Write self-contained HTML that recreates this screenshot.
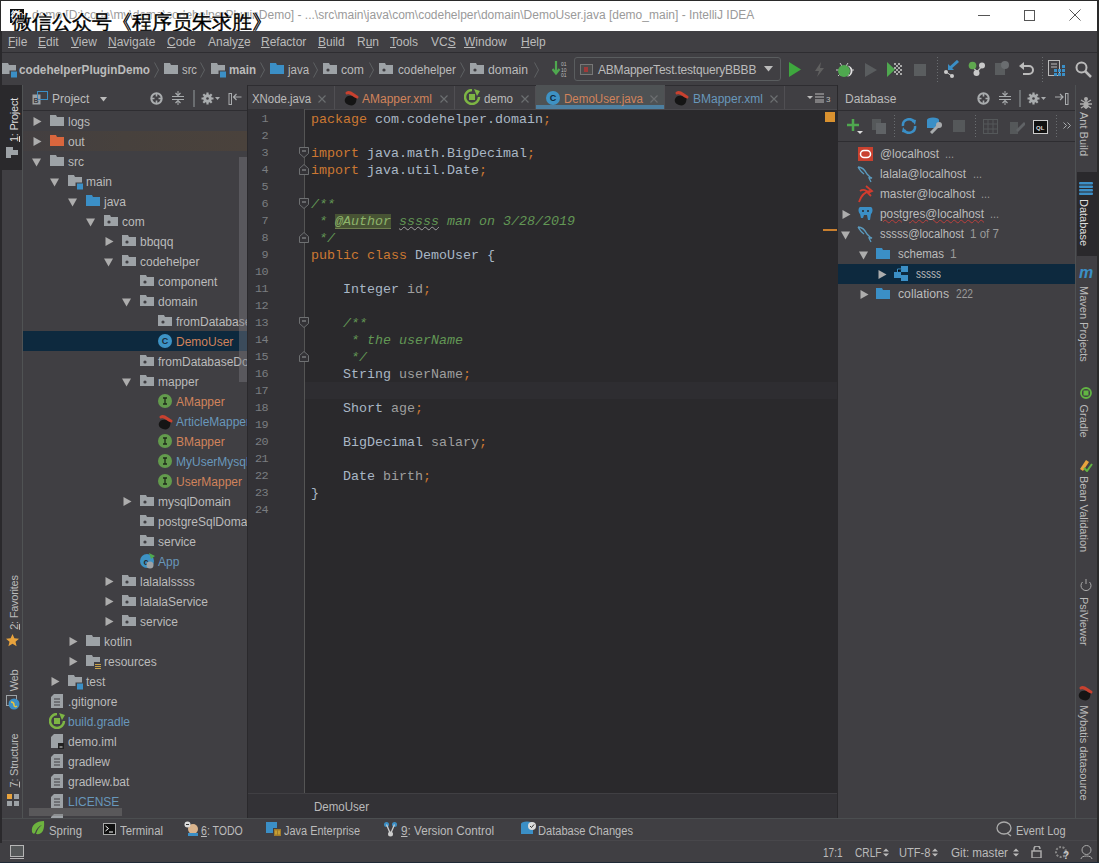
<!DOCTYPE html>
<html><head><meta charset="utf-8">
<style>
*{margin:0;padding:0;box-sizing:border-box}
html,body{width:1099px;height:863px;overflow:hidden;background:#403F43;font-family:"Liberation Sans",sans-serif;font-size:12px;color:#BBBBBB;position:relative}
.a{position:absolute}
.t{position:absolute;white-space:nowrap;line-height:15px}
u{text-decoration:underline;text-underline-offset:1px}
.code{white-space:pre;font-family:"Liberation Mono",monospace;font-size:13.33px;line-height:17px;color:#A9B7C6}
.ln{font-family:"Liberation Mono",monospace;font-size:11.8px;letter-spacing:-0.6px;line-height:17px;color:#7A7D80;text-align:right}
k{color:#CC7832}
c{color:#629755;font-style:italic}
f{color:#9E9E9E}
.an{background:#475334;color:#8DB46A;box-shadow:inset 0 -1px 0 #6F7F4F}
.ty{text-decoration:underline wavy #A0A0A0;text-decoration-thickness:1px}
</style></head><body>
<div class="a" style="left:0px;top:0px;width:1099px;height:31px;background:#FFFFFF;"></div>
<div class="a" style="left:0px;top:0px;width:1099px;height:1px;background:#2A2A2A;"></div>
<div class="a" style="left:0px;top:0px;width:1px;height:31px;background:#2A2A2A;"></div>
<div class="a" style="left:1097px;top:0px;width:2px;height:863px;background:#2A2A2A;"></div>
<div class="t" style="left:32px;top:8px;color:#9A9A9A;font-size:12px;letter-spacing:0px;">demo [D:\code\my\demo\codehelperPluginDemo] - ...\src\main\java\com\codehelper\domain\DemoUser.java [demo_main] - IntelliJ IDEA</div>
<div class="a" style="left:10px;top:9px;width:14px;height:14px;background:#111;"></div>
<div class="t" style="left:11px;top:8px;color:#fff;font-size:11px;font-weight:bold;">微</div>
<div class="t" style="left:12px;top:12px;font-size:19.5px;line-height:20px;color:#000;-webkit-text-stroke:0.4px #000;text-shadow:1px 0 #fff,-1px 0 #fff,0 1px #fff,0 -1px #fff;">微信公众号《程序员朱求胜》</div>
<div class="a" style="left:978px;top:15px;width:12px;height:1px;background:#555;"></div>
<div class="a" style="left:1024px;top:10px;width:11px;height:11px;background:transparent;border:1px solid #555;"></div>
<svg class="a" style="left:1069px;top:9px;" width="12" height="12" viewBox="0 0 12 12"><path d="M0.5 0.5L11.5 11.5M11.5 0.5L0.5 11.5" stroke="#555" stroke-width="1"/></svg>
<div class="a" style="left:0px;top:31px;width:1097px;height:21px;background:#403F43;"></div>
<div class="t" style="left:8px;top:35px;color:#BBBBBB;font-size:12px;"><u>F</u>ile</div>
<div class="t" style="left:38px;top:35px;color:#BBBBBB;font-size:12px;"><u>E</u>dit</div>
<div class="t" style="left:71px;top:35px;color:#BBBBBB;font-size:12px;"><u>V</u>iew</div>
<div class="t" style="left:108px;top:35px;color:#BBBBBB;font-size:12px;"><u>N</u>avigate</div>
<div class="t" style="left:167px;top:35px;color:#BBBBBB;font-size:12px;"><u>C</u>ode</div>
<div class="t" style="left:208px;top:35px;color:#BBBBBB;font-size:12px;">Analy<u>z</u>e</div>
<div class="t" style="left:261px;top:35px;color:#BBBBBB;font-size:12px;"><u>R</u>efactor</div>
<div class="t" style="left:318px;top:35px;color:#BBBBBB;font-size:12px;"><u>B</u>uild</div>
<div class="t" style="left:357px;top:35px;color:#BBBBBB;font-size:12px;">R<u>u</u>n</div>
<div class="t" style="left:390px;top:35px;color:#BBBBBB;font-size:12px;"><u>T</u>ools</div>
<div class="t" style="left:431px;top:35px;color:#BBBBBB;font-size:12px;">VC<u>S</u></div>
<div class="t" style="left:464px;top:35px;color:#BBBBBB;font-size:12px;"><u>W</u>indow</div>
<div class="t" style="left:521px;top:35px;color:#BBBBBB;font-size:12px;"><u>H</u>elp</div>
<div class="a" style="left:0px;top:52px;width:1097px;height:1px;background:#2E2D31;"></div>
<div class="a" style="left:0px;top:53px;width:1097px;height:32px;background:#403F43;"></div>
<div class="a" style="left:0px;top:85px;width:1097px;height:1px;background:#2E2D31;"></div>
<svg class="a" style="left:2px;top:63px;" width="16" height="15" viewBox="0 0 16 15"><path d="M0 0h6l1 2h7v9H0z" fill="#9DA2A6"/><rect x="7.5" y="7.5" width="8" height="7" fill="#403F43"/><rect x="9" y="8.5" width="6" height="6" fill="#3B8FC6"/></svg>
<div class="t" style="left:19px;top:63px;color:#BBBBBB;font-size:12px;font-weight:bold;transform-origin:0 0;transform:scaleX(0.9775);">codehelperPluginDemo</div>
<svg class="a" style="left:164px;top:63px;" width="14" height="12" viewBox="0 0 14 12"><path d="M0 0h6l1 2h7v9H0z" fill="#9DA2A6"/></svg>
<div class="t" style="left:182px;top:63px;color:#BBBBBB;font-size:12px;transform-origin:0 0;transform:scaleX(0.9377);">src</div>
<svg class="a" style="left:211px;top:63px;" width="16" height="15" viewBox="0 0 16 15"><path d="M0 0h6l1 2h7v9H0z" fill="#9DA2A6"/><rect x="7.5" y="7.5" width="8" height="7" fill="#403F43"/><rect x="9" y="8.5" width="6" height="6" fill="#3B8FC6"/></svg>
<div class="t" style="left:229px;top:63px;color:#BBBBBB;font-size:12px;font-weight:bold;transform-origin:0 0;transform:scaleX(0.9640);">main</div>
<svg class="a" style="left:270px;top:63px;" width="14" height="12" viewBox="0 0 14 12"><path d="M0 0h6l1 2h7v9H0z" fill="#3B8FC6"/></svg>
<div class="t" style="left:288px;top:63px;color:#BBBBBB;font-size:12px;transform-origin:0 0;transform:scaleX(0.9540);">java</div>
<svg class="a" style="left:323px;top:63px;" width="14" height="12" viewBox="0 0 14 12"><path d="M0 0h6l1 2h7v9H0z" fill="#9DA2A6"/><circle cx="5" cy="7" r="1.6" fill="#403F43"/></svg>
<div class="t" style="left:341px;top:63px;color:#BBBBBB;font-size:12px;transform-origin:0 0;transform:scaleX(1.0146);">com</div>
<svg class="a" style="left:379px;top:63px;" width="14" height="12" viewBox="0 0 14 12"><path d="M0 0h6l1 2h7v9H0z" fill="#9DA2A6"/><circle cx="5" cy="7" r="1.6" fill="#403F43"/></svg>
<div class="t" style="left:398px;top:63px;color:#BBBBBB;font-size:12px;transform-origin:0 0;transform:scaleX(0.9768);">codehelper</div>
<svg class="a" style="left:470px;top:63px;" width="14" height="12" viewBox="0 0 14 12"><path d="M0 0h6l1 2h7v9H0z" fill="#9DA2A6"/><circle cx="5" cy="7" r="1.6" fill="#403F43"/></svg>
<div class="t" style="left:488px;top:63px;color:#BBBBBB;font-size:12px;transform-origin:0 0;transform:scaleX(1.0163);">domain</div>
<svg class="a" style="left:154px;top:62px;" width="5" height="16" viewBox="0 0 5 16"><path d="M0.5 0.5L4.5 8L0.5 15.5" stroke="#5E6163" fill="none" stroke-width="1"/></svg>
<svg class="a" style="left:200px;top:62px;" width="5" height="16" viewBox="0 0 5 16"><path d="M0.5 0.5L4.5 8L0.5 15.5" stroke="#5E6163" fill="none" stroke-width="1"/></svg>
<svg class="a" style="left:260px;top:62px;" width="5" height="16" viewBox="0 0 5 16"><path d="M0.5 0.5L4.5 8L0.5 15.5" stroke="#5E6163" fill="none" stroke-width="1"/></svg>
<svg class="a" style="left:313px;top:62px;" width="5" height="16" viewBox="0 0 5 16"><path d="M0.5 0.5L4.5 8L0.5 15.5" stroke="#5E6163" fill="none" stroke-width="1"/></svg>
<svg class="a" style="left:369px;top:62px;" width="5" height="16" viewBox="0 0 5 16"><path d="M0.5 0.5L4.5 8L0.5 15.5" stroke="#5E6163" fill="none" stroke-width="1"/></svg>
<svg class="a" style="left:460px;top:62px;" width="5" height="16" viewBox="0 0 5 16"><path d="M0.5 0.5L4.5 8L0.5 15.5" stroke="#5E6163" fill="none" stroke-width="1"/></svg>
<svg class="a" style="left:534px;top:62px;" width="5" height="16" viewBox="0 0 5 16"><path d="M0.5 0.5L4.5 8L0.5 15.5" stroke="#5E6163" fill="none" stroke-width="1"/></svg>
<svg class="a" style="left:552px;top:61px;" width="16" height="17" viewBox="0 0 16 17"><path d="M4 0v11M0.5 8L4 12.5L7.5 8" stroke="#4FA84F" stroke-width="2.2" fill="none"/><text x="9" y="5" font-size="5" fill="#BBB" font-family="Liberation Sans">01</text><text x="9" y="10.5" font-size="5" fill="#BBB" font-family="Liberation Sans">10</text><text x="9" y="16" font-size="5" fill="#BBB" font-family="Liberation Sans">01</text></svg>
<div class="a" style="left:574px;top:57px;width:207px;height:24px;background:#403F43;border:1px solid #5A5D5F;border-radius:3px;"></div>
<div class="a" style="left:580px;top:64px;width:13px;height:11px;background:#4B4B4B;border:1px solid #777;"></div>
<div class="a" style="left:584px;top:67px;width:4px;height:5px;background:#A03A3A;"></div>
<div class="t" style="left:598px;top:63px;color:#BBBBBB;font-size:12px;letter-spacing:-0.2px;">ABMapperTest.testqueryBBBB</div>
<svg class="a" style="left:764px;top:66px;" width="9" height="6" viewBox="0 0 9 6"><path d="M0 0H9L4.5 5.5z" fill="#BBBBBB"/></svg>
<svg class="a" style="left:789px;top:62px;" width="12" height="15" viewBox="0 0 12 15"><path d="M0 0L12 7.5L0 15z" fill="#3EA73E"/></svg>
<svg class="a" style="left:815px;top:62px;" width="9" height="15" viewBox="0 0 9 15"><path d="M6 0L0 9h4l-2 6 7-9H5z" fill="#606060"/></svg>
<svg class="a" style="left:836px;top:61px;" width="18" height="17" viewBox="0 0 18 17"><path d="M4 2l2 3M12 2l-2 3M0 9h3M15 9h3M2 15l2-2M14 15l-2-2" stroke="#C9C9C9" stroke-width="1"/><circle cx="8" cy="10" r="6" fill="#4FA84F"/><path d="M11 4.5a6 6 0 0 1 0 11a4.5 4.5 0 0 0 0-11z" fill="#E0E0E0"/></svg>
<svg class="a" style="left:865px;top:63px;" width="12" height="14" viewBox="0 0 12 14"><path d="M0 0L12 7L0 14z" fill="#5A5D5F"/></svg>
<svg class="a" style="left:887px;top:62px;" width="16" height="15" viewBox="0 0 16 15"><path d="M0 0L8 7.5L0 15z" fill="#4FA84F"/><g fill="#AAAAAA"><rect x="7" y="1" width="2" height="2"/><rect x="11" y="1" width="2" height="2"/><rect x="9" y="3" width="2" height="2"/><rect x="13" y="3" width="2" height="2"/><rect x="7" y="5" width="2" height="2"/><rect x="11" y="5" width="2" height="2"/><rect x="9" y="7" width="2" height="2"/><rect x="13" y="7" width="2" height="2"/><rect x="7" y="9" width="2" height="2"/><rect x="11" y="9" width="2" height="2"/><rect x="9" y="11" width="2" height="2"/><rect x="13" y="11" width="2" height="2"/></g></svg>
<div class="a" style="left:914px;top:64px;width:12px;height:12px;background:#5A5D5F;"></div>
<svg class="a" style="left:937px;top:57px;" width="1" height="26" viewBox="0 0 1 26"><path d="M0.5 0V26" stroke="#6A6D70" stroke-dasharray="1 2"/></svg>
<svg class="a" style="left:1042px;top:57px;" width="1" height="26" viewBox="0 0 1 26"><path d="M0.5 0V26" stroke="#6A6D70" stroke-dasharray="1 2"/></svg>
<svg class="a" style="left:943px;top:60px;" width="16" height="18" viewBox="0 0 16 18"><path d="M15 1L6 9" stroke="#3B8FC6" stroke-width="3"/><path d="M5 4v6h6z" fill="#3B8FC6"/><circle cx="3" cy="12" r="2" fill="#ccc"/><circle cx="9" cy="16" r="2" fill="#ccc"/><path d="M3 12L9 16" stroke="#ccc"/></svg>
<svg class="a" style="left:968px;top:61px;" width="18" height="17" viewBox="0 0 18 17"><path d="M4 5L9 11L15 4" stroke="#BBBBBB" stroke-width="1.3" fill="none"/><circle cx="4.5" cy="4.5" r="3.8" fill="#5FA84F"/><circle cx="14" cy="4.5" r="3" fill="#C9C9C9"/><circle cx="8.5" cy="12" r="3" fill="#C9C9C9"/></svg>
<svg class="a" style="left:994px;top:60px;" width="15" height="17" viewBox="0 0 15 17"><rect x="1" y="3" width="10" height="12" fill="#5A5D5F"/><circle cx="11" cy="5" r="4" fill="#6A6D70"/></svg>
<svg class="a" style="left:1019px;top:61px;" width="15" height="15" viewBox="0 0 15 15"><path d="M3 5h7a4 4 0 0 1 0 8H4" stroke="#BBBBBB" stroke-width="2" fill="none"/><path d="M0 5L5 1v8z" fill="#BBBBBB"/></svg>
<svg class="a" style="left:1048px;top:60px;" width="17" height="18" viewBox="0 0 17 18"><rect x="0.5" y="0.5" width="11" height="15" fill="none" stroke="#BBB"/><path d="M3 4h6M3 7h6" stroke="#BBB"/><g fill="#3B8FC6"><rect x="6" y="9" width="3" height="3"/><rect x="10" y="9" width="3" height="3"/><rect x="14" y="9" width="3" height="3"/><rect x="6" y="13" width="3" height="3"/><rect x="10" y="13" width="3" height="3"/><rect x="14" y="13" width="3" height="3"/><rect x="14" y="5" width="3" height="3"/></g></svg>
<svg class="a" style="left:1075px;top:61px;" width="17" height="17" viewBox="0 0 17 17"><circle cx="6.5" cy="6.5" r="5" stroke="#BBBBBB" stroke-width="2" fill="none"/><path d="M10 10L16 16" stroke="#BBBBBB" stroke-width="2.5"/></svg>
<div class="a" style="left:0px;top:85px;width:23px;height:733px;background:#403F43;"></div>
<div class="a" style="left:22px;top:85px;width:1px;height:733px;background:#505354;"></div>
<div class="a" style="left:0px;top:31px;width:2px;height:832px;background:#2A292C;"></div>
<div class="a" style="left:2px;top:85px;width:20px;height:85px;background:#2A292C;"></div>
<div class="t" style="left:6px;top:98px;width:44px;height:16px;transform-origin:0 0;color:#DDDDDD;font-size:11px;line-height:16px;text-align:center;letter-spacing:-0.25px;transform:translate(0,44px) rotate(-90deg);"><u>1</u>: Project</div>
<svg class="a" style="left:6px;top:147px;" width="12" height="11" viewBox="0 0 12 11"><path d="M0 0h7v3h5v5H5v3H0z" fill="#9DA2A6"/></svg>
<div class="t" style="left:6px;top:575px;width:55px;height:16px;transform-origin:0 0;color:#BBBBBB;font-size:11px;line-height:16px;text-align:center;letter-spacing:-0.25px;transform:translate(0,55px) rotate(-90deg);"><u>2</u>: Favorites</div>
<svg class="a" style="left:6px;top:634px;" width="13" height="13" viewBox="0 0 13 13"><path d="M6.5 0l1.9 4.3 4.6 0.4-3.5 3 1.1 4.6-4.1-2.5-4.1 2.5 1.1-4.6-3.5-3 4.6-0.4z" fill="#E8A33D"/></svg>
<div class="t" style="left:6px;top:669px;width:23px;height:16px;transform-origin:0 0;color:#BBBBBB;font-size:11px;line-height:16px;text-align:center;letter-spacing:-0.25px;transform:translate(0,23px) rotate(-90deg);">Web</div>
<svg class="a" style="left:6px;top:695px;" width="14" height="15" viewBox="0 0 14 15"><rect x="0.5" y="0.5" width="10" height="10" fill="none" stroke="#9DA2A6"/><circle cx="8" cy="9" r="5.5" fill="#3D8FC6"/><path d="M5 7c2 0 3 1 3 3s2 2 3 1" stroke="#E8C33D" stroke-width="1.5" fill="none"/></svg>
<div class="t" style="left:6px;top:732px;width:57px;height:16px;transform-origin:0 0;color:#BBBBBB;font-size:11px;line-height:16px;text-align:center;letter-spacing:-0.25px;transform:translate(0,57px) rotate(-90deg);"><u>7</u>: Structure</div>
<svg class="a" style="left:7px;top:794px;" width="12" height="12" viewBox="0 0 12 12"><rect x="0" y="0" width="5" height="5" fill="#E8A33D"/><rect x="7" y="0" width="5" height="5" fill="#9DA2A6"/><rect x="7" y="7" width="5" height="5" fill="#9DA2A6"/><rect x="0" y="7" width="5" height="5" fill="#9DA2A6"/></svg>
<div class="a" style="left:23px;top:85px;width:225px;height:733px;background:#403F43;"></div>
<div class="a" style="left:23px;top:110px;width:225px;height:1px;background:#2E2D31;"></div>
<svg class="a" style="left:32px;top:91px;" width="16" height="14" viewBox="0 0 16 14"><rect x="0.5" y="3.5" width="8" height="10" fill="#9DA2A6"/><rect x="5.5" y="0.5" width="10" height="8" fill="none" stroke="#3B8FC6"/><text x="1.5" y="12" font-size="7" font-family="Liberation Sans" font-weight="bold" fill="#403F43">B</text></svg>
<div class="t" style="left:52px;top:92px;color:#BBBBBB;font-size:12px;">Project</div>
<svg class="a" style="left:100px;top:97px;" width="7" height="5" viewBox="0 0 7 5"><path d="M0 0H7L3.5 4.5z" fill="#BBBBBB"/></svg>
<svg class="a" style="left:150px;top:92px;" width="13" height="13" viewBox="0 0 13 13"><circle cx="6.5" cy="6.5" r="5.2" stroke="#A9ACAE" stroke-width="2" fill="none"/><path d="M6.5 1.5v3M6.5 8.5v3M1.5 6.5h3M8.5 6.5h3" stroke="#A9ACAE" stroke-width="1.6"/></svg>
<svg class="a" style="left:172px;top:91px;" width="12" height="14" viewBox="0 0 12 14"><path d="M0 5.5h12M0 8.5h12" stroke="#A9ACAE" stroke-width="1"/><path d="M6 0v4M6 10v4" stroke="#A9ACAE" stroke-width="1"/><path d="M3.5 2L6 4.5L8.5 2M3.5 12L6 9.5L8.5 12" stroke="#A9ACAE" stroke-width="1.2" fill="none"/></svg>
<div class="a" style="left:193px;top:90px;width:2px;height:17px;background:#6A6D70;"></div>
<svg class="a" style="left:201px;top:92px;" width="20" height="13" viewBox="0 0 20 13"><path d="M6.5 0.5v12M0.5 6.5h12M2.3 2.3l8.4 8.4M10.7 2.3l-8.4 8.4" stroke="#A9ACAE" stroke-width="2.2"/><circle cx="6.5" cy="6.5" r="4.3" fill="#A9ACAE"/><circle cx="6.5" cy="6.5" r="1.3" fill="#403F43"/><path d="M14 5h5l-2.5 3z" fill="#A9ACAE"/></svg>
<svg class="a" style="left:228px;top:92px;" width="14" height="13" viewBox="0 0 14 13"><rect x="1" y="1.5" width="2.5" height="11" fill="none" stroke="#A9ACAE" stroke-width="1"/><path d="M5.5 5h8M8.5 2L5.5 5l3 3" stroke="#A9ACAE" stroke-width="1.2" fill="none"/></svg>
<div class="a" style="left:23px;top:108px;width:225px;height:710px;overflow:hidden">
<div class="a" style="left:0px;top:23px;width:225px;height:20px;background:linear-gradient(90deg,#433F41 0%,#47413D 45%,#4A423C 100%);"></div>
<div class="a" style="left:0px;top:223px;width:225px;height:20px;background:#0D293E;"></div>
<svg class="a" style="left:10px;top:9px;" width="9" height="9" viewBox="0 0 9 9"><path d="M0.5 0L8.5 4.5L0.5 9z" fill="#ADADAD"/></svg>
<svg class="a" style="left:27px;top:7px;" width="14" height="12" viewBox="0 0 14 12"><path d="M0 0h6l1 2h7v9H0z" fill="#9DA2A6"/></svg>
<div class="t" style="left:45px;top:7px;color:#BBBBBB;font-size:12px;">logs</div>
<svg class="a" style="left:10px;top:29px;" width="9" height="9" viewBox="0 0 9 9"><path d="M0.5 0L8.5 4.5L0.5 9z" fill="#ADADAD"/></svg>
<svg class="a" style="left:27px;top:27px;" width="14" height="12" viewBox="0 0 14 12"><path d="M0 0h6l1 2h7v9H0z" fill="#D9663D"/></svg>
<div class="t" style="left:45px;top:27px;color:#BBBBBB;font-size:12px;">out</div>
<svg class="a" style="left:9px;top:50px;" width="9" height="9" viewBox="0 0 9 9"><path d="M0 0.5H9L4.5 8.5z" fill="#ADADAD"/></svg>
<svg class="a" style="left:27px;top:47px;" width="14" height="12" viewBox="0 0 14 12"><path d="M0 0h6l1 2h7v9H0z" fill="#9DA2A6"/></svg>
<div class="t" style="left:45px;top:47px;color:#BBBBBB;font-size:12px;">src</div>
<svg class="a" style="left:27px;top:70px;" width="9" height="9" viewBox="0 0 9 9"><path d="M0 0.5H9L4.5 8.5z" fill="#ADADAD"/></svg>
<svg class="a" style="left:45px;top:67px;" width="16" height="15" viewBox="0 0 16 15"><path d="M0 0h6l1 2h7v9H0z" fill="#9DA2A6"/><rect x="7.5" y="7.5" width="8" height="7" fill="#403F43"/><rect x="9" y="8.5" width="6" height="6" fill="#3B8FC6"/></svg>
<div class="t" style="left:63px;top:67px;color:#BBBBBB;font-size:12px;">main</div>
<svg class="a" style="left:45px;top:90px;" width="9" height="9" viewBox="0 0 9 9"><path d="M0 0.5H9L4.5 8.5z" fill="#ADADAD"/></svg>
<svg class="a" style="left:63px;top:87px;" width="14" height="12" viewBox="0 0 14 12"><path d="M0 0h6l1 2h7v9H0z" fill="#3B8FC6"/></svg>
<div class="t" style="left:81px;top:87px;color:#BBBBBB;font-size:12px;">java</div>
<svg class="a" style="left:63px;top:110px;" width="9" height="9" viewBox="0 0 9 9"><path d="M0 0.5H9L4.5 8.5z" fill="#ADADAD"/></svg>
<svg class="a" style="left:81px;top:107px;" width="14" height="12" viewBox="0 0 14 12"><path d="M0 0h6l1 2h7v9H0z" fill="#9DA2A6"/><circle cx="5" cy="7" r="1.6" fill="#403F43"/></svg>
<div class="t" style="left:99px;top:107px;color:#BBBBBB;font-size:12px;">com</div>
<svg class="a" style="left:82px;top:129px;" width="9" height="9" viewBox="0 0 9 9"><path d="M0.5 0L8.5 4.5L0.5 9z" fill="#ADADAD"/></svg>
<svg class="a" style="left:99px;top:127px;" width="14" height="12" viewBox="0 0 14 12"><path d="M0 0h6l1 2h7v9H0z" fill="#9DA2A6"/><circle cx="5" cy="7" r="1.6" fill="#403F43"/></svg>
<div class="t" style="left:117px;top:127px;color:#BBBBBB;font-size:12px;">bbqqq</div>
<svg class="a" style="left:81px;top:150px;" width="9" height="9" viewBox="0 0 9 9"><path d="M0 0.5H9L4.5 8.5z" fill="#ADADAD"/></svg>
<svg class="a" style="left:99px;top:147px;" width="14" height="12" viewBox="0 0 14 12"><path d="M0 0h6l1 2h7v9H0z" fill="#9DA2A6"/><circle cx="5" cy="7" r="1.6" fill="#403F43"/></svg>
<div class="t" style="left:117px;top:147px;color:#BBBBBB;font-size:12px;">codehelper</div>
<svg class="a" style="left:117px;top:167px;" width="14" height="12" viewBox="0 0 14 12"><path d="M0 0h6l1 2h7v9H0z" fill="#9DA2A6"/><circle cx="5" cy="7" r="1.6" fill="#403F43"/></svg>
<div class="t" style="left:135px;top:167px;color:#BBBBBB;font-size:12px;">component</div>
<svg class="a" style="left:99px;top:190px;" width="9" height="9" viewBox="0 0 9 9"><path d="M0 0.5H9L4.5 8.5z" fill="#ADADAD"/></svg>
<svg class="a" style="left:117px;top:187px;" width="14" height="12" viewBox="0 0 14 12"><path d="M0 0h6l1 2h7v9H0z" fill="#9DA2A6"/><circle cx="5" cy="7" r="1.6" fill="#403F43"/></svg>
<div class="t" style="left:135px;top:187px;color:#BBBBBB;font-size:12px;">domain</div>
<svg class="a" style="left:135px;top:207px;" width="14" height="12" viewBox="0 0 14 12"><path d="M0 0h6l1 2h7v9H0z" fill="#9DA2A6"/><circle cx="5" cy="7" r="1.6" fill="#403F43"/></svg>
<div class="t" style="left:153px;top:207px;color:#BBBBBB;font-size:12px;">fromDatabase</div>
<svg class="a" style="left:135px;top:226px;" width="14" height="14" viewBox="0 0 14 14"><circle cx="7" cy="7" r="7" fill="#3D93C5"/><text x="7" y="10.3" font-family="Liberation Sans" font-size="9" font-weight="bold" text-anchor="middle" fill="#1B2B38">C</text></svg>
<div class="t" style="left:153px;top:227px;color:#D1835B;font-size:12px;">DemoUser</div>
<svg class="a" style="left:117px;top:247px;" width="14" height="12" viewBox="0 0 14 12"><path d="M0 0h6l1 2h7v9H0z" fill="#9DA2A6"/><circle cx="5" cy="7" r="1.6" fill="#403F43"/></svg>
<div class="t" style="left:135px;top:247px;color:#BBBBBB;font-size:12px;">fromDatabaseDo</div>
<svg class="a" style="left:99px;top:270px;" width="9" height="9" viewBox="0 0 9 9"><path d="M0 0.5H9L4.5 8.5z" fill="#ADADAD"/></svg>
<svg class="a" style="left:117px;top:267px;" width="14" height="12" viewBox="0 0 14 12"><path d="M0 0h6l1 2h7v9H0z" fill="#9DA2A6"/><circle cx="5" cy="7" r="1.6" fill="#403F43"/></svg>
<div class="t" style="left:135px;top:267px;color:#BBBBBB;font-size:12px;">mapper</div>
<svg class="a" style="left:135px;top:286px;" width="14" height="14" viewBox="0 0 14 14"><circle cx="7" cy="7" r="7" fill="#629B4C"/><path d="M5 4h4M7 4v6M5 10h4" stroke="#1E2A1A" stroke-width="1.3"/></svg>
<div class="t" style="left:153px;top:287px;color:#D1835B;font-size:12px;">AMapper</div>
<svg class="a" style="left:135px;top:306px;" width="16" height="16" viewBox="0 0 16 16"><path d="M1 9c1-3 4-4 7-3l5 1-1 5c-1 3-4 4-7 3C2 14 0 12 1 9z" fill="#151515"/><path d="M3 3c2-1 4 0 6 1.5s3 2 4 2.5" stroke="#C8412F" stroke-width="3" fill="none" stroke-linecap="round"/></svg>
<div class="t" style="left:153px;top:307px;color:#6897BB;font-size:12px;">ArticleMapper</div>
<svg class="a" style="left:135px;top:326px;" width="14" height="14" viewBox="0 0 14 14"><circle cx="7" cy="7" r="7" fill="#629B4C"/><path d="M5 4h4M7 4v6M5 10h4" stroke="#1E2A1A" stroke-width="1.3"/></svg>
<div class="t" style="left:153px;top:327px;color:#D1835B;font-size:12px;">BMapper</div>
<svg class="a" style="left:135px;top:346px;" width="14" height="14" viewBox="0 0 14 14"><circle cx="7" cy="7" r="7" fill="#629B4C"/><path d="M5 4h4M7 4v6M5 10h4" stroke="#1E2A1A" stroke-width="1.3"/></svg>
<div class="t" style="left:153px;top:347px;color:#6897BB;font-size:12px;">MyUserMysql</div>
<svg class="a" style="left:135px;top:366px;" width="14" height="14" viewBox="0 0 14 14"><circle cx="7" cy="7" r="7" fill="#629B4C"/><path d="M5 4h4M7 4v6M5 10h4" stroke="#1E2A1A" stroke-width="1.3"/></svg>
<div class="t" style="left:153px;top:367px;color:#D1835B;font-size:12px;">UserMapper</div>
<svg class="a" style="left:100px;top:389px;" width="9" height="9" viewBox="0 0 9 9"><path d="M0.5 0L8.5 4.5L0.5 9z" fill="#ADADAD"/></svg>
<svg class="a" style="left:117px;top:387px;" width="14" height="12" viewBox="0 0 14 12"><path d="M0 0h6l1 2h7v9H0z" fill="#9DA2A6"/><circle cx="5" cy="7" r="1.6" fill="#403F43"/></svg>
<div class="t" style="left:135px;top:387px;color:#BBBBBB;font-size:12px;">mysqlDomain</div>
<svg class="a" style="left:117px;top:407px;" width="14" height="12" viewBox="0 0 14 12"><path d="M0 0h6l1 2h7v9H0z" fill="#9DA2A6"/><circle cx="5" cy="7" r="1.6" fill="#403F43"/></svg>
<div class="t" style="left:135px;top:407px;color:#BBBBBB;font-size:12px;">postgreSqlDomain</div>
<svg class="a" style="left:117px;top:427px;" width="14" height="12" viewBox="0 0 14 12"><path d="M0 0h6l1 2h7v9H0z" fill="#9DA2A6"/><circle cx="5" cy="7" r="1.6" fill="#403F43"/></svg>
<div class="t" style="left:135px;top:427px;color:#BBBBBB;font-size:12px;">service</div>
<svg class="a" style="left:117px;top:445px;" width="16" height="16" viewBox="0 0 16 16"><circle cx="7" cy="8" r="7" fill="#3D93C5"/><text x="6" y="11.5" font-size="9" font-weight="bold" font-family="Liberation Sans" fill="#2A292C" text-anchor="middle">c</text><path d="M9 0l6 3-4 3z" fill="#4FA84F"/><circle cx="10" cy="12" r="3.5" fill="#9DA2A6"/></svg>
<div class="t" style="left:135px;top:447px;color:#6897BB;font-size:12px;">App</div>
<svg class="a" style="left:82px;top:469px;" width="9" height="9" viewBox="0 0 9 9"><path d="M0.5 0L8.5 4.5L0.5 9z" fill="#ADADAD"/></svg>
<svg class="a" style="left:99px;top:467px;" width="14" height="12" viewBox="0 0 14 12"><path d="M0 0h6l1 2h7v9H0z" fill="#9DA2A6"/><circle cx="5" cy="7" r="1.6" fill="#403F43"/></svg>
<div class="t" style="left:117px;top:467px;color:#BBBBBB;font-size:12px;">lalalalssss</div>
<svg class="a" style="left:82px;top:489px;" width="9" height="9" viewBox="0 0 9 9"><path d="M0.5 0L8.5 4.5L0.5 9z" fill="#ADADAD"/></svg>
<svg class="a" style="left:99px;top:487px;" width="14" height="12" viewBox="0 0 14 12"><path d="M0 0h6l1 2h7v9H0z" fill="#9DA2A6"/><circle cx="5" cy="7" r="1.6" fill="#403F43"/></svg>
<div class="t" style="left:117px;top:487px;color:#BBBBBB;font-size:12px;">lalalaService</div>
<svg class="a" style="left:82px;top:509px;" width="9" height="9" viewBox="0 0 9 9"><path d="M0.5 0L8.5 4.5L0.5 9z" fill="#ADADAD"/></svg>
<svg class="a" style="left:99px;top:507px;" width="14" height="12" viewBox="0 0 14 12"><path d="M0 0h6l1 2h7v9H0z" fill="#9DA2A6"/><circle cx="5" cy="7" r="1.6" fill="#403F43"/></svg>
<div class="t" style="left:117px;top:507px;color:#BBBBBB;font-size:12px;">service</div>
<svg class="a" style="left:46px;top:529px;" width="9" height="9" viewBox="0 0 9 9"><path d="M0.5 0L8.5 4.5L0.5 9z" fill="#ADADAD"/></svg>
<svg class="a" style="left:63px;top:527px;" width="14" height="12" viewBox="0 0 14 12"><path d="M0 0h6l1 2h7v9H0z" fill="#9DA2A6"/></svg>
<div class="t" style="left:81px;top:527px;color:#BBBBBB;font-size:12px;">kotlin</div>
<svg class="a" style="left:46px;top:549px;" width="9" height="9" viewBox="0 0 9 9"><path d="M0.5 0L8.5 4.5L0.5 9z" fill="#ADADAD"/></svg>
<svg class="a" style="left:63px;top:547px;" width="16" height="15" viewBox="0 0 16 15"><path d="M0 0h6l1 2h7v9H0z" fill="#9DA2A6"/><rect x="8" y="7" width="8" height="8" fill="#403F43"/><path d="M9 9.5h6M9 11.5h6M9 13.5h6" stroke="#C9A24A" stroke-width="1"/></svg>
<div class="t" style="left:81px;top:547px;color:#BBBBBB;font-size:12px;">resources</div>
<svg class="a" style="left:28px;top:569px;" width="9" height="9" viewBox="0 0 9 9"><path d="M0.5 0L8.5 4.5L0.5 9z" fill="#ADADAD"/></svg>
<svg class="a" style="left:45px;top:567px;" width="16" height="15" viewBox="0 0 16 15"><path d="M0 0h6l1 2h7v9H0z" fill="#9DA2A6"/><rect x="7.5" y="7.5" width="8" height="7" fill="#403F43"/><rect x="9" y="8.5" width="6" height="6" fill="#3B8FC6"/></svg>
<div class="t" style="left:63px;top:567px;color:#BBBBBB;font-size:12px;">test</div>
<svg class="a" style="left:28px;top:586px;" width="12" height="14" viewBox="0 0 12 14"><path d="M3 0h9v14H0V3z" fill="#9DA2A6"/><path d="M3 5h6M3 8h6M3 11h6" stroke="#403F43" stroke-width="1"/></svg>
<div class="t" style="left:45px;top:587px;color:#BBBBBB;font-size:12px;">.gitignore</div>
<svg class="a" style="left:26px;top:605px;" width="17" height="16" viewBox="0 0 17 16"><path d="M8 1a7 7 0 1 0 7 7" stroke="#7DB544" stroke-width="2.5" fill="none"/><path d="M10 0l6 2-3 5z" fill="#7DB544"/><rect x="5" y="5" width="6" height="6" fill="#7DB544"/></svg>
<div class="t" style="left:45px;top:607px;color:#6897BB;font-size:12px;">build.gradle</div>
<svg class="a" style="left:28px;top:626px;" width="13" height="15" viewBox="0 0 13 15"><path d="M3 0h9v14H0V3z" fill="#9DA2A6"/><rect x="7" y="9" width="6" height="6" fill="#222"/><path d="M8.5 13h3" stroke="#ddd"/></svg>
<div class="t" style="left:45px;top:627px;color:#BBBBBB;font-size:12px;">demo.iml</div>
<svg class="a" style="left:28px;top:646px;" width="12" height="14" viewBox="0 0 12 14"><path d="M3 0h9v14H0V3z" fill="#9DA2A6"/><path d="M3 5h6M3 8h6M3 11h6" stroke="#403F43" stroke-width="1"/></svg>
<div class="t" style="left:45px;top:647px;color:#BBBBBB;font-size:12px;">gradlew</div>
<svg class="a" style="left:28px;top:666px;" width="12" height="14" viewBox="0 0 12 14"><path d="M3 0h9v14H0V3z" fill="#9DA2A6"/><path d="M3 5h6M3 8h6M3 11h6" stroke="#403F43" stroke-width="1"/></svg>
<div class="t" style="left:45px;top:667px;color:#BBBBBB;font-size:12px;">gradlew.bat</div>
<svg class="a" style="left:28px;top:686px;" width="12" height="14" viewBox="0 0 12 14"><path d="M3 0h9v14H0V3z" fill="#9DA2A6"/><path d="M3 5h6M3 8h6M3 11h6" stroke="#403F43" stroke-width="1"/></svg>
<div class="t" style="left:45px;top:687px;color:#6897BB;font-size:12px;">LICENSE</div>
<svg class="a" style="left:28px;top:706px;" width="12" height="14" viewBox="0 0 12 14"><path d="M3 0h9v14H0V3z" fill="#9DA2A6"/><path d="M3 5h6M3 8h6M3 11h6" stroke="#403F43" stroke-width="1"/></svg>
<div class="a" style="left:216px;top:49px;width:9px;height:225px;background:rgba(125,125,130,0.42);"></div>
<div class="a" style="left:6px;top:700px;width:93px;height:8px;background:rgba(120,120,120,0.45);"></div>
</div>
<div class="a" style="left:247px;top:85px;width:1px;height:733px;background:#2A292C;"></div>
<div class="a" style="left:248px;top:85px;width:589px;height:733px;background:#2A292C;"></div>
<div class="a" style="left:248px;top:85px;width:589px;height:25px;background:#403F43;"></div>
<div class="a" style="left:248px;top:85px;width:589px;height:1px;background:#2E2D31;"></div>
<div class="a" style="left:248px;top:109px;width:589px;height:1px;background:#4A494D;"></div>
<div class="a" style="left:334px;top:86px;width:1px;height:23px;background:#504F53;"></div>
<div class="t" style="left:252px;top:92px;color:#BBBBBB;font-size:12px;transform-origin:0 0;transform:scaleX(0.9510);">XNode.java</div>
<svg class="a" style="left:318px;top:95px;" width="8" height="8" viewBox="0 0 8 8"><path d="M0.5 0.5L7.5 7.5M7.5 0.5L0.5 7.5" stroke="#6B6E70" stroke-width="1.2"/></svg>
<div class="a" style="left:454px;top:86px;width:1px;height:23px;background:#504F53;"></div>
<svg class="a" style="left:344px;top:90px;" width="16" height="16" viewBox="0 0 16 16"><path d="M1 9c1-3 4-4 7-3l5 1-1 5c-1 3-4 4-7 3C2 14 0 12 1 9z" fill="#151515"/><path d="M3 3c2-1 4 0 6 1.5s3 2 4 2.5" stroke="#C8412F" stroke-width="3" fill="none" stroke-linecap="round"/></svg>
<div class="t" style="left:362px;top:92px;color:#D1835B;font-size:12px;transform-origin:0 0;transform:scaleX(0.9996);">AMapper.xml</div>
<svg class="a" style="left:440px;top:95px;" width="8" height="8" viewBox="0 0 8 8"><path d="M0.5 0.5L7.5 7.5M7.5 0.5L0.5 7.5" stroke="#6B6E70" stroke-width="1.2"/></svg>
<div class="a" style="left:535px;top:86px;width:1px;height:23px;background:#504F53;"></div>
<svg class="a" style="left:464px;top:89px;" width="17" height="16" viewBox="0 0 17 16"><path d="M8 1a7 7 0 1 0 7 7" stroke="#7DB544" stroke-width="2.5" fill="none"/><path d="M10 0l6 2-3 5z" fill="#7DB544"/><rect x="5" y="5" width="6" height="6" fill="#7DB544"/></svg>
<div class="t" style="left:484px;top:92px;color:#BBBBBB;font-size:12px;transform-origin:0 0;transform:scaleX(0.9661);">demo</div>
<svg class="a" style="left:521px;top:95px;" width="8" height="8" viewBox="0 0 8 8"><path d="M0.5 0.5L7.5 7.5M7.5 0.5L0.5 7.5" stroke="#6B6E70" stroke-width="1.2"/></svg>
<div class="a" style="left:536px;top:85px;width:129px;height:23px;background:#4E5254;"></div>
<div class="a" style="left:536px;top:105px;width:129px;height:4px;background:#4D7FA0;"></div>
<div class="a" style="left:664px;top:86px;width:1px;height:23px;background:#504F53;"></div>
<svg class="a" style="left:546px;top:91px;" width="14" height="14" viewBox="0 0 14 14"><circle cx="7" cy="7" r="7" fill="#3E92C4"/><text x="7" y="10.3" font-family="Liberation Sans" font-size="9" font-weight="bold" text-anchor="middle" fill="#10283A">C</text></svg>
<div class="t" style="left:564px;top:92px;color:#D1835B;font-size:12px;transform-origin:0 0;transform:scaleX(0.9630);">DemoUser.java</div>
<svg class="a" style="left:650px;top:95px;" width="8" height="8" viewBox="0 0 8 8"><path d="M0.5 0.5L7.5 7.5M7.5 0.5L0.5 7.5" stroke="#6B6E70" stroke-width="1.2"/></svg>
<div class="a" style="left:784px;top:86px;width:1px;height:23px;background:#504F53;"></div>
<svg class="a" style="left:674px;top:90px;" width="16" height="16" viewBox="0 0 16 16"><path d="M1 9c1-3 4-4 7-3l5 1-1 5c-1 3-4 4-7 3C2 14 0 12 1 9z" fill="#151515"/><path d="M3 3c2-1 4 0 6 1.5s3 2 4 2.5" stroke="#C8412F" stroke-width="3" fill="none" stroke-linecap="round"/></svg>
<div class="t" style="left:693px;top:92px;color:#6897BB;font-size:12px;transform-origin:0 0;transform:scaleX(0.9996);">BMapper.xml</div>
<svg class="a" style="left:770px;top:95px;" width="8" height="8" viewBox="0 0 8 8"><path d="M0.5 0.5L7.5 7.5M7.5 0.5L0.5 7.5" stroke="#6B6E70" stroke-width="1.2"/></svg>
<svg class="a" style="left:807px;top:93px;" width="26" height="10" viewBox="0 0 26 10"><path d="M0 3h6L3 6z" fill="#BBB"/><path d="M8 1h9M8 4h9M8 7h9M8 9h9" stroke="#BBB"/><text x="19" y="9" font-size="8" fill="#BBB" font-family="Liberation Sans">3</text></svg>
<div class="a" style="left:248px;top:109px;width:57px;height:685px;background:#333236;"></div>
<div class="a" style="left:304px;top:109px;width:1px;height:685px;background:#555555;"></div>
<div class="a" style="left:305px;top:382px;width:532px;height:17px;background:#2E2D31;"></div>
<div class="t ln" style="left:240px;top:111px;width:28px;">1</div>
<div class="t code" style="left:311px;top:111px;"><k>package</k> com.codehelper.domain<k>;</k></div>
<div class="t ln" style="left:240px;top:128px;width:28px;">2</div>
<div class="t ln" style="left:240px;top:145px;width:28px;">3</div>
<div class="t code" style="left:311px;top:145px;"><k>import</k> java.math.BigDecimal<k>;</k></div>
<div class="t ln" style="left:240px;top:162px;width:28px;">4</div>
<div class="t code" style="left:311px;top:162px;"><k>import</k> java.util.Date<k>;</k></div>
<div class="t ln" style="left:240px;top:179px;width:28px;">5</div>
<div class="t ln" style="left:240px;top:196px;width:28px;">6</div>
<div class="t code" style="left:311px;top:196px;"><c>/**</c></div>
<div class="t ln" style="left:240px;top:213px;width:28px;">7</div>
<div class="t code" style="left:311px;top:213px;"><c> * <span class="an">@Author</span> <span class="ty">sssss</span> man on 3/28/2019</c></div>
<div class="t ln" style="left:240px;top:230px;width:28px;">8</div>
<div class="t code" style="left:311px;top:230px;"><c> */</c></div>
<div class="t ln" style="left:240px;top:247px;width:28px;">9</div>
<div class="t code" style="left:311px;top:247px;"><k>public class</k> DemoUser {</div>
<div class="t ln" style="left:240px;top:264px;width:28px;">10</div>
<div class="t ln" style="left:240px;top:281px;width:28px;">11</div>
<div class="t code" style="left:311px;top:281px;">    Integer <f>id</f><k>;</k></div>
<div class="t ln" style="left:240px;top:298px;width:28px;">12</div>
<div class="t ln" style="left:240px;top:315px;width:28px;">13</div>
<div class="t code" style="left:311px;top:315px;">    <c>/**</c></div>
<div class="t ln" style="left:240px;top:332px;width:28px;">14</div>
<div class="t code" style="left:311px;top:332px;">    <c> * the userName</c></div>
<div class="t ln" style="left:240px;top:349px;width:28px;">15</div>
<div class="t code" style="left:311px;top:349px;">    <c> */</c></div>
<div class="t ln" style="left:240px;top:366px;width:28px;">16</div>
<div class="t code" style="left:311px;top:366px;">    String <f>userName</f><k>;</k></div>
<div class="t ln" style="left:240px;top:383px;width:28px;">17</div>
<div class="t ln" style="left:240px;top:400px;width:28px;">18</div>
<div class="t code" style="left:311px;top:400px;">    Short <f>age</f><k>;</k></div>
<div class="t ln" style="left:240px;top:417px;width:28px;">19</div>
<div class="t ln" style="left:240px;top:434px;width:28px;">20</div>
<div class="t code" style="left:311px;top:434px;">    BigDecimal <f>salary</f><k>;</k></div>
<div class="t ln" style="left:240px;top:451px;width:28px;">21</div>
<div class="t ln" style="left:240px;top:468px;width:28px;">22</div>
<div class="t code" style="left:311px;top:468px;">    Date <f>birth</f><k>;</k></div>
<div class="t ln" style="left:240px;top:485px;width:28px;">23</div>
<div class="t code" style="left:311px;top:485px;">}</div>
<div class="t ln" style="left:240px;top:502px;width:28px;">24</div>
<svg class="a" style="left:299px;top:147px;" width="11" height="11" viewBox="0 0 11 11"><path d="M0.5 0.5h9v6l-4.5 4-4.5-4z" fill="#333236" stroke="#6E7072"/><path d="M3 4h4" stroke="#9A9C9E"/></svg>
<svg class="a" style="left:299px;top:164px;" width="11" height="11" viewBox="0 0 11 11"><path d="M0.5 10.5h9v-6l-4.5-4-4.5 4z" fill="#333236" stroke="#6E7072"/><path d="M3 6h4" stroke="#9A9C9E"/></svg>
<svg class="a" style="left:299px;top:198px;" width="11" height="11" viewBox="0 0 11 11"><path d="M0.5 0.5h9v6l-4.5 4-4.5-4z" fill="#333236" stroke="#6E7072"/><path d="M3 4h4" stroke="#9A9C9E"/></svg>
<svg class="a" style="left:299px;top:232px;" width="11" height="11" viewBox="0 0 11 11"><path d="M0.5 10.5h9v-6l-4.5-4-4.5 4z" fill="#333236" stroke="#6E7072"/><path d="M3 6h4" stroke="#9A9C9E"/></svg>
<svg class="a" style="left:299px;top:317px;" width="11" height="11" viewBox="0 0 11 11"><path d="M0.5 0.5h9v6l-4.5 4-4.5-4z" fill="#333236" stroke="#6E7072"/><path d="M3 4h4" stroke="#9A9C9E"/></svg>
<svg class="a" style="left:299px;top:351px;" width="11" height="11" viewBox="0 0 11 11"><path d="M0.5 10.5h9v-6l-4.5-4-4.5 4z" fill="#333236" stroke="#6E7072"/><path d="M3 6h4" stroke="#9A9C9E"/></svg>
<div class="a" style="left:825px;top:112px;width:10px;height:10px;background:#D9912F;"></div>
<div class="a" style="left:823px;top:229px;width:14px;height:2px;background:#C97F2E;"></div>
<div class="a" style="left:248px;top:794px;width:589px;height:24px;background:#333236;"></div>
<div class="a" style="left:248px;top:793px;width:589px;height:1px;background:#403F43;"></div>
<div class="t" style="left:314px;top:800px;color:#BBBBBB;font-size:12px;transform-origin:0 0;transform:scaleX(0.9591);">DemoUser</div>
<div class="a" style="left:837px;top:85px;width:1px;height:733px;background:#2A292C;"></div>
<div class="a" style="left:838px;top:85px;width:238px;height:733px;background:#403F43;"></div>
<div class="t" style="left:845px;top:92px;color:#BBBBBB;font-size:12px;">Database</div>
<svg class="a" style="left:977px;top:92px;" width="13" height="13" viewBox="0 0 13 13"><circle cx="6.5" cy="6.5" r="5.2" stroke="#A9ACAE" stroke-width="2" fill="none"/><path d="M6.5 1.5v3M6.5 8.5v3M1.5 6.5h3M8.5 6.5h3" stroke="#A9ACAE" stroke-width="1.6"/></svg>
<svg class="a" style="left:999px;top:91px;" width="12" height="14" viewBox="0 0 12 14"><path d="M0 5.5h12M0 8.5h12" stroke="#A9ACAE" stroke-width="1"/><path d="M6 0v4M6 10v4" stroke="#A9ACAE" stroke-width="1"/><path d="M3.5 2L6 4.5L8.5 2M3.5 12L6 9.5L8.5 12" stroke="#A9ACAE" stroke-width="1.2" fill="none"/></svg>
<div class="a" style="left:1019px;top:90px;width:2px;height:17px;background:#6A6D70;"></div>
<svg class="a" style="left:1027px;top:92px;" width="20" height="13" viewBox="0 0 20 13"><path d="M6.5 0.5v12M0.5 6.5h12M2.3 2.3l8.4 8.4M10.7 2.3l-8.4 8.4" stroke="#A9ACAE" stroke-width="2.2"/><circle cx="6.5" cy="6.5" r="4.3" fill="#A9ACAE"/><circle cx="6.5" cy="6.5" r="1.3" fill="#403F43"/><path d="M14 5h5l-2.5 3z" fill="#A9ACAE"/></svg>
<svg class="a" style="left:1055px;top:92px;" width="14" height="13" viewBox="0 0 14 13"><path d="M0 5h8M5 2l3 3-3 3" stroke="#A9ACAE" stroke-width="1.2" fill="none"/><rect x="10.5" y="1.5" width="2.5" height="11" fill="none" stroke="#A9ACAE" stroke-width="1"/></svg>
<div class="a" style="left:838px;top:110px;width:238px;height:1px;background:#2E2D31;"></div>
<div class="a" style="left:838px;top:141px;width:238px;height:1px;background:#2E2D31;"></div>
<svg class="a" style="left:846px;top:118px;" width="17" height="17" viewBox="0 0 17 17"><path d="M7 1v12M1 7h12" stroke="#4FA84F" stroke-width="2.5"/><path d="M11 13h6l-3 3z" fill="#DDD"/></svg>
<svg class="a" style="left:872px;top:119px;" width="15" height="15" viewBox="0 0 15 15"><rect x="0" y="0" width="9" height="11" fill="#55585A"/><rect x="4" y="4" width="10" height="11" fill="#606366"/></svg>
<svg class="a" style="left:894px;top:115px;" width="1" height="24" viewBox="0 0 1 24"><path d="M0.5 0V24" stroke="#6A6D70" stroke-dasharray="1 2"/></svg>
<svg class="a" style="left:975px;top:115px;" width="1" height="24" viewBox="0 0 1 24"><path d="M0.5 0V24" stroke="#6A6D70" stroke-dasharray="1 2"/></svg>
<svg class="a" style="left:1056px;top:115px;" width="1" height="24" viewBox="0 0 1 24"><path d="M0.5 0V24" stroke="#6A6D70" stroke-dasharray="1 2"/></svg>
<svg class="a" style="left:901px;top:118px;" width="16" height="16" viewBox="0 0 16 16"><path d="M13 4A6 6 0 0 0 2 8" stroke="#3B8FC6" stroke-width="2.5" fill="none"/><path d="M3 12A6 6 0 0 0 14 8" stroke="#3B8FC6" stroke-width="2.5" fill="none"/><path d="M10 1l5 1-1 5z M6 15l-5-1 1-5z" fill="#3B8FC6"/></svg>
<svg class="a" style="left:926px;top:117px;" width="17" height="17" viewBox="0 0 17 17"><ellipse cx="7" cy="3" rx="6" ry="2.5" fill="#3B8FC6"/><rect x="1" y="3" width="12" height="8" fill="#3B8FC6"/><path d="M5 16l7-7" stroke="#A9ACAE" stroke-width="3"/><circle cx="13" cy="8" r="3" fill="#A9ACAE"/></svg>
<div class="a" style="left:953px;top:120px;width:12px;height:12px;background:#55585A;"></div>
<svg class="a" style="left:983px;top:119px;" width="15" height="15" viewBox="0 0 15 15"><rect x="0.5" y="0.5" width="14" height="14" fill="none" stroke="#55585A"/><path d="M0 5h15M0 10h15M5 0v15M10 0v15" stroke="#55585A"/></svg>
<svg class="a" style="left:1010px;top:118px;" width="15" height="16" viewBox="0 0 15 16"><path d="M0 4h8v12H0z" fill="#55585A"/><path d="M6 12l8-8 2 2-8 8z" fill="#606366"/></svg>
<svg class="a" style="left:1033px;top:120px;" width="15" height="14" viewBox="0 0 15 14"><rect x="0.5" y="0.5" width="14" height="13" fill="#111" stroke="#CCC"/><text x="3" y="10" font-size="6" font-weight="bold" fill="#DDD" font-family="Liberation Sans">QL</text></svg>
<svg class="a" style="left:1063px;top:122px;" width="8" height="7" viewBox="0 0 8 7"><path d="M0.5 0.5l3 3-3 3M4.5 0.5l3 3-3 3" stroke="#A9ACAE" fill="none"/></svg>
<div class="a" style="left:838px;top:264px;width:237px;height:20px;background:#0D293E;"></div>
<svg class="a" style="left:858px;top:147px;" width="15" height="14" viewBox="0 0 15 14"><rect width="15" height="14" fill="#C9412F"/><rect x="2.5" y="3.5" width="10" height="7" rx="3.5" fill="none" stroke="#fff" stroke-width="1.5"/></svg>
<div class="t" style="left:880px;top:147px;color:#BBBBBB;font-size:12px;transform-origin:0 0;transform:scaleX(0.9909);">@localhost</div>
<div class="t" style="left:945px;top:147px;color:#9A9A9A;font-size:12px;transform-origin:0 0;transform:scaleX(0.8998);">...</div>
<svg class="a" style="left:857px;top:166px;" width="17" height="17" viewBox="0 0 17 17"><path d="M1 1c4 0 7 3 9 7l3 3 2 1-3 0 2 4M1 1c2 3 3 5 6 7" stroke="#5B9BBF" stroke-width="1.3" fill="none"/></svg>
<div class="t" style="left:880px;top:167px;color:#BBBBBB;font-size:12px;transform-origin:0 0;transform:scaleX(0.9822);">lalala@localhost</div>
<div class="t" style="left:973px;top:167px;color:#9A9A9A;font-size:12px;transform-origin:0 0;transform:scaleX(0.8998);">...</div>
<svg class="a" style="left:857px;top:185px;" width="17" height="18" viewBox="0 0 17 18"><path d="M9 1l6 5-4 2 3 3M2 17c2-6 5-10 11-11M3 6c3-2 7-1 9 2" stroke="#D23C2E" stroke-width="1.8" fill="none"/></svg>
<div class="t" style="left:880px;top:187px;color:#BBBBBB;font-size:12px;transform-origin:0 0;transform:scaleX(0.9874);">master@localhost</div>
<div class="t" style="left:981px;top:187px;color:#9A9A9A;font-size:12px;transform-origin:0 0;transform:scaleX(0.8998);">...</div>
<svg class="a" style="left:842px;top:210px;" width="9" height="9" viewBox="0 0 9 9"><path d="M0.5 0L8.5 4.5L0.5 9z" fill="#ADADAD"/></svg>
<svg class="a" style="left:858px;top:206px;" width="15" height="16" viewBox="0 0 15 16"><path d="M2 1c-2 1-2 5 0 7l1 4h2l1-3h3l1 5h2l1-6c2-2 2-6 0-7z" fill="#3B8FC6"/><circle cx="5" cy="5" r="1" fill="#2A292C"/><circle cx="10" cy="5" r="1" fill="#2A292C"/></svg>
<div class="t" style="left:880px;top:207px;color:#BBBBBB;font-size:12px;transform-origin:0 0;transform:scaleX(0.9851);"><span style="text-decoration:underline wavy #BC3F3C;text-decoration-thickness:1px;">postgres@localhost</span></div>
<div class="t" style="left:990px;top:207px;color:#9A9A9A;font-size:12px;transform-origin:0 0;transform:scaleX(0.8998);">...</div>
<svg class="a" style="left:841px;top:231px;" width="9" height="9" viewBox="0 0 9 9"><path d="M0 0.5H9L4.5 8.5z" fill="#ADADAD"/></svg>
<svg class="a" style="left:857px;top:226px;" width="17" height="17" viewBox="0 0 17 17"><path d="M1 1c4 0 7 3 9 7l3 3 2 1-3 0 2 4M1 1c2 3 3 5 6 7" stroke="#5B9BBF" stroke-width="1.3" fill="none"/></svg>
<div class="t" style="left:880px;top:227px;color:#BBBBBB;font-size:12px;transform-origin:0 0;transform:scaleX(0.9381);">sssss@localhost</div>
<div class="t" style="left:970px;top:227px;color:#9A9A9A;font-size:12px;transform-origin:0 0;transform:scaleX(0.9659);">1 of 7</div>
<svg class="a" style="left:859px;top:251px;" width="9" height="9" viewBox="0 0 9 9"><path d="M0 0.5H9L4.5 8.5z" fill="#ADADAD"/></svg>
<svg class="a" style="left:876px;top:248px;" width="14" height="12" viewBox="0 0 14 12"><path d="M0 0h6l1 2h7v9H0z" fill="#3B8FC6"/></svg>
<div class="t" style="left:898px;top:247px;color:#BBBBBB;font-size:12px;transform-origin:0 0;transform:scaleX(0.9580);">schemas</div>
<div class="t" style="left:950px;top:247px;color:#9A9A9A;font-size:12px;">1</div>
<svg class="a" style="left:878px;top:270px;" width="9" height="9" viewBox="0 0 9 9"><path d="M0.5 0L8.5 4.5L0.5 9z" fill="#ADADAD"/></svg>
<svg class="a" style="left:894px;top:266px;" width="15" height="15" viewBox="0 0 15 15"><rect x="7" y="0" width="7" height="6" fill="#3B8FC6"/><rect x="0" y="6" width="7" height="6" fill="#3B8FC6"/><rect x="7" y="9" width="7" height="6" fill="#3B8FC6"/><path d="M3.5 6V3h4M7 12h1" stroke="#3B8FC6"/></svg>
<div class="t" style="left:916px;top:267px;color:#BBBBBB;font-size:12px;transform-origin:0 0;transform:scaleX(0.8333);">sssss</div>
<svg class="a" style="left:860px;top:290px;" width="9" height="9" viewBox="0 0 9 9"><path d="M0.5 0L8.5 4.5L0.5 9z" fill="#ADADAD"/></svg>
<svg class="a" style="left:876px;top:288px;" width="14" height="12" viewBox="0 0 14 12"><path d="M0 0h6l1 2h7v9H0z" fill="#3B8FC6"/></svg>
<div class="t" style="left:898px;top:287px;color:#BBBBBB;font-size:12px;transform-origin:0 0;transform:scaleX(1.0194);">collations</div>
<div class="t" style="left:956px;top:287px;color:#9A9A9A;font-size:12px;transform-origin:0 0;transform:scaleX(0.8491);">222</div>
<div class="a" style="left:1075px;top:85px;width:1px;height:733px;background:#4E5153;"></div>
<div class="a" style="left:1076px;top:85px;width:21px;height:733px;background:#403F43;"></div>
<div class="a" style="left:1077px;top:172px;width:20px;height:84px;background:#2A292C;"></div>
<svg class="a" style="left:1079px;top:96px;" width="14" height="13" viewBox="0 0 14 13"><path d="M7 2v11M2 4l5 3 5-3M1 8h12M2 12l5-3 5 3" stroke="#AAA" stroke-width="1.3" fill="none"/><circle cx="7" cy="3" r="2" fill="#AAA"/><ellipse cx="7" cy="9" rx="2.5" ry="3.5" fill="#AAA"/></svg>
<div class="t" style="left:1076px;top:111px;width:46px;height:16px;transform-origin:0 0;color:#BBBBBB;font-size:11px;line-height:16px;text-align:center;letter-spacing:0px;transform:translate(16px,0) rotate(90deg);">Ant Build</div>
<div class="t" style="left:1076px;top:199px;width:47px;height:16px;transform-origin:0 0;color:#DDDDDD;font-size:11px;line-height:16px;text-align:center;letter-spacing:0px;transform:translate(16px,0) rotate(90deg);">Database</div>
<svg class="a" style="left:1079px;top:182px;" width="14" height="13" viewBox="0 0 14 13"><g fill="#3D8FC6"><rect x="0" y="0" width="14" height="2.5" rx="1"/><rect x="0" y="3.5" width="14" height="2.5" rx="1"/><rect x="0" y="7" width="14" height="2.5" rx="1"/><rect x="0" y="10.5" width="14" height="2.5" rx="1"/></g></svg>
<div class="t" style="left:1079px;top:265px;color:#3B8FC6;font-size:16px;"><i style="font-weight:bold">m</i></div>
<div class="t" style="left:1076px;top:286px;width:74px;height:16px;transform-origin:0 0;color:#BBBBBB;font-size:11px;line-height:16px;text-align:center;letter-spacing:0px;transform:translate(16px,0) rotate(90deg);">Maven Projects</div>
<svg class="a" style="left:1080px;top:387px;" width="12" height="12" viewBox="0 0 12 12"><circle cx="6" cy="6" r="5" stroke="#62B543" stroke-width="1.8" fill="none"/><rect x="3.5" y="3.5" width="5" height="5" fill="#62B543"/></svg>
<div class="t" style="left:1076px;top:404px;width:34px;height:16px;transform-origin:0 0;color:#BBBBBB;font-size:11px;line-height:16px;text-align:center;letter-spacing:0px;transform:translate(16px,0) rotate(90deg);">Gradle</div>
<svg class="a" style="left:1079px;top:459px;" width="14" height="13" viewBox="0 0 14 13"><path d="M1 10l6-9 3 2-6 9z" fill="#E8A33D"/><path d="M5 9l3 3 5-7" stroke="#62B543" stroke-width="2" fill="none"/></svg>
<div class="t" style="left:1076px;top:475px;width:78px;height:16px;transform-origin:0 0;color:#BBBBBB;font-size:11px;line-height:16px;text-align:center;letter-spacing:0px;transform:translate(16px,0) rotate(90deg);">Bean Validation</div>
<svg class="a" style="left:1080px;top:579px;" width="12" height="12" viewBox="0 0 12 12"><path d="M2.5 3a5 5 0 1 0 7 0" stroke="#AAA" fill="none"/><path d="M6 0v5" stroke="#AAA"/></svg>
<div class="t" style="left:1076px;top:597px;width:47px;height:16px;transform-origin:0 0;color:#BBBBBB;font-size:11px;line-height:16px;text-align:center;letter-spacing:0px;transform:translate(16px,0) rotate(90deg);">PsiViewer</div>
<svg class="a" style="left:1078px;top:685px;" width="16" height="16" viewBox="0 0 16 16"><path d="M1 9c1-3 4-4 7-3l5 1-1 5c-1 3-4 4-7 3C2 14 0 12 1 9z" fill="#151515"/><path d="M3 3c2-1 4 0 6 1.5s3 2 4 2.5" stroke="#C8412F" stroke-width="3" fill="none" stroke-linecap="round"/></svg>
<div class="t" style="left:1076px;top:704px;width:98px;height:16px;transform-origin:0 0;color:#BBBBBB;font-size:11px;line-height:16px;text-align:center;letter-spacing:0px;transform:translate(16px,0) rotate(90deg);">Mybatis datasource</div>
<div class="a" style="left:2px;top:818px;width:1095px;height:1px;background:#4B4E50;"></div>
<div class="a" style="left:2px;top:819px;width:1095px;height:24px;background:#403F43;"></div>
<svg class="a" style="left:31px;top:821px;" width="14" height="14" viewBox="0 0 14 14"><path d="M13 0C5 0 0 4 1 11 2 13 3 13 4 12 5 8 8 5 11 4 8 6 6 9 5 13c6 1 9-4 8-13z" fill="#6DB33F"/></svg>
<div class="t" style="left:49px;top:824px;color:#BBBBBB;font-size:12px;transform-origin:0 0;transform:scaleX(0.9514);">Spring</div>
<svg class="a" style="left:103px;top:823px;" width="13" height="12" viewBox="0 0 13 12"><rect x="0.5" y="0.5" width="12" height="11" fill="#111" stroke="#AAA"/><path d="M2.5 3l3 2.5-3 2.5M6 9h4" stroke="#fff" fill="none"/></svg>
<div class="t" style="left:120px;top:824px;color:#BBBBBB;font-size:12px;transform-origin:0 0;transform:scaleX(0.9483);">Terminal</div>
<svg class="a" style="left:184px;top:821px;" width="15" height="15" viewBox="0 0 15 15"><circle cx="9" cy="8" r="5" fill="#D9B38C"/><rect x="4" y="12" width="10" height="3" fill="#3B8FC6"/><circle cx="3.5" cy="3.5" r="3" fill="#ddd"/><path d="M2 3.5h3" stroke="#333"/></svg>
<div class="t" style="left:201px;top:824px;color:#BBBBBB;font-size:12px;transform-origin:0 0;transform:scaleX(0.8789);"><u>6</u>: TODO</div>
<svg class="a" style="left:266px;top:822px;" width="15" height="14" viewBox="0 0 15 14"><rect x="0" y="0" width="11" height="11" fill="#3B8FC6"/><rect x="7" y="6" width="8" height="8" fill="#403F43"/><rect x="8" y="7" width="7" height="7" fill="#A07A2A"/><path d="M10 8.5v4M13 8.5v4" stroke="#E8C33D"/></svg>
<div class="t" style="left:284px;top:824px;color:#BBBBBB;font-size:12px;transform-origin:0 0;transform:scaleX(0.9116);">Java Enterprise</div>
<svg class="a" style="left:384px;top:822px;" width="13" height="15" viewBox="0 0 13 15"><circle cx="2.5" cy="2.5" r="2.5" fill="#3B8FC6"/><circle cx="10.5" cy="2.5" r="2.5" fill="#3B8FC6"/><circle cx="6.5" cy="12" r="2.5" fill="#ccc"/><path d="M2.5 2.5L6.5 12L10.5 2.5" stroke="#ccc" stroke-width="1.3" fill="none"/></svg>
<div class="t" style="left:401px;top:824px;color:#BBBBBB;font-size:12px;transform-origin:0 0;transform:scaleX(0.9750);"><u>9</u>: Version Control</div>
<svg class="a" style="left:521px;top:821px;" width="15" height="15" viewBox="0 0 15 15"><ellipse cx="6" cy="3" rx="6" ry="2.5" fill="#3B8FC6"/><rect x="0" y="3" width="12" height="10" fill="#3B8FC6"/><circle cx="11" cy="5" r="4" fill="#ddd"/><path d="M9 5l1.5 1.5L13 3.5" stroke="#333" fill="none"/></svg>
<div class="t" style="left:538px;top:824px;color:#BBBBBB;font-size:12px;transform-origin:0 0;transform:scaleX(0.9247);">Database Changes</div>
<svg class="a" style="left:996px;top:821px;" width="17" height="16" viewBox="0 0 17 16"><ellipse cx="8" cy="7" rx="7" ry="6" stroke="#AAA" stroke-width="1.3" fill="none"/><path d="M11 12l4 3" stroke="#AAA" stroke-width="1.3"/></svg>
<div class="t" style="left:1016px;top:824px;color:#BBBBBB;font-size:12px;transform-origin:0 0;transform:scaleX(0.9160);">Event Log</div>
<div class="a" style="left:0px;top:843px;width:1097px;height:19px;background:#403F43;"></div>
<div class="a" style="left:10px;top:845px;width:14px;height:12px;background:#555859;border:1px solid #B5B5B5;"></div>
<div class="a" style="left:10px;top:858px;width:14px;height:1px;background:#B5B5B5;"></div>
<div class="t" style="left:823px;top:846px;color:#BBBBBB;font-size:12px;transform-origin:0 0;transform:scaleX(0.8349);">17:1</div>
<div class="t" style="left:855px;top:846px;color:#BBBBBB;font-size:12px;transform-origin:0 0;transform:scaleX(0.8457);">CRLF</div>
<div class="t" style="left:899px;top:846px;color:#BBBBBB;font-size:12px;transform-origin:0 0;transform:scaleX(0.9266);">UTF-8</div>
<div class="t" style="left:951px;top:846px;color:#BBBBBB;font-size:12px;transform-origin:0 0;transform:scaleX(0.9714);">Git: master</div>
<svg class="a" style="left:883px;top:848px;" width="6" height="9" viewBox="0 0 6 9"><path d="M0 3.5L3 0.5L6 3.5zM0 5.5L3 8.5L6 5.5z" fill="#BBBBBB"/></svg>
<svg class="a" style="left:932px;top:848px;" width="6" height="9" viewBox="0 0 6 9"><path d="M0 3.5L3 0.5L6 3.5zM0 5.5L3 8.5L6 5.5z" fill="#BBBBBB"/></svg>
<svg class="a" style="left:1013px;top:848px;" width="6" height="9" viewBox="0 0 6 9"><path d="M0 3.5L3 0.5L6 3.5zM0 5.5L3 8.5L6 5.5z" fill="#BBBBBB"/></svg>
<div class="a" style="left:2px;top:840px;width:1095px;height:1px;background:#48474B;"></div>
<svg class="a" style="left:1031px;top:846px;" width="11" height="12" viewBox="0 0 11 12"><rect x="1" y="5" width="9" height="7" fill="none" stroke="#AAA" stroke-width="1.5"/><path d="M3 5V3a3 3 0 0 1 6 0" stroke="#AAA" stroke-width="1.5" fill="none"/></svg>
<svg class="a" style="left:1055px;top:845px;" width="15" height="15" viewBox="0 0 15 15"><circle cx="6" cy="7" r="5" stroke="#888" stroke-width="2" fill="none" stroke-dasharray="2 1.5"/><text x="8" y="14" font-size="10" font-weight="bold" fill="#ccc" font-family="Liberation Sans">?</text></svg>
<svg class="a" style="left:1080px;top:845px;" width="13" height="15" viewBox="0 0 13 15"><circle cx="6.5" cy="5" r="4.5" fill="none" stroke="#AAA"/><path d="M1 14c0-4 11-4 11 0" stroke="#AAA" fill="none"/></svg>
<div class="a" style="left:0px;top:862px;width:1099px;height:1px;background:#1F2A36;"></div>
</body></html>
